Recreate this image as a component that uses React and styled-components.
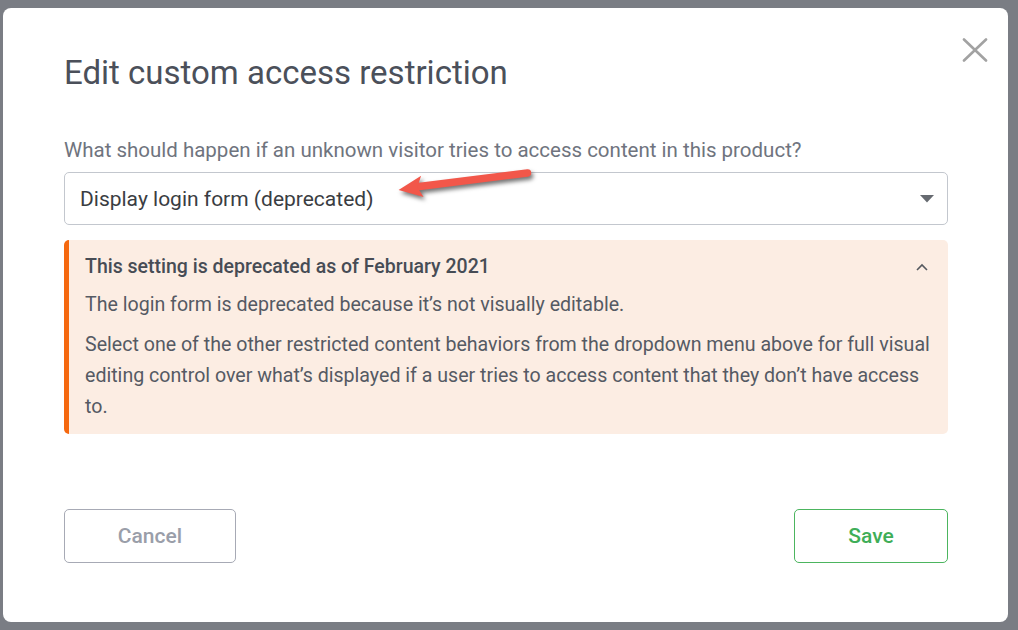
import React from 'react';
import styled, { createGlobalStyle } from 'styled-components';

const GlobalStyle = createGlobalStyle`
  html, body {
    margin: 0;
    padding: 0;
    background: #7a7d84;
  }
  body {
    font-family: Roboto, "Liberation Sans", Arial, sans-serif;
  }
`;

function App() {
  return (
    <>
      <GlobalStyle />
      <Backdrop>
        <Modal>
          <CloseButton aria-label="Close">
            <svg width="26" height="24" viewBox="0 0 26 24" fill="none" stroke="currentColor" strokeWidth="2.6" strokeLinecap="round">
              <line x1="2" y1="1.5" x2="24" y2="22.5" />
              <line x1="24" y1="1.5" x2="2" y2="22.5" />
            </svg>
          </CloseButton>

          <Title>Edit custom access restriction</Title>

          <Label>What should happen if an unknown visitor tries to access content in this product?</Label>

          <SelectWrap>
            <SelectBox>
              <span>Display login form (deprecated)</span>
              <svg width="14" height="8" viewBox="0 0 14 8">
                <path d="M0 0h14L7 7.5z" fill="#666a70" />
              </svg>
            </SelectBox>
            <Pointer width="140" height="34" viewBox="0 0 140 34">
              <g transform="rotate(-6.6 70 17)">
                <line x1="20" y1="17" x2="131" y2="16" stroke="#f2574a" strokeWidth="7.5" strokeLinecap="round" />
                <path d="M1 18 L25 6.5 L20 17.5 L25 28 Z" fill="#f2574a" />
              </g>
            </Pointer>
          </SelectWrap>

          <Notice>
            <NoticeHead>
              <NoticeTitle>This setting is deprecated as of February 2021</NoticeTitle>
              <svg width="12" height="8" viewBox="0 0 12 8" fill="none" stroke="#55595f" strokeWidth="1.6">
                <path d="M1 7L6 2l5 5" />
              </svg>
            </NoticeHead>
            <NoticeText>The login form is deprecated because it’s not visually editable.</NoticeText>
            <NoticeText>
              Select one of the other restricted content behaviors from the dropdown menu above for full visual
              editing control over what’s displayed if a user tries to access content that they don’t have access to.
            </NoticeText>
          </Notice>

          <Footer>
            <Button $tone="cancel">Cancel</Button>
            <Button $tone="save">Save</Button>
          </Footer>
        </Modal>
      </Backdrop>
    </>
  );
}

const Backdrop = styled.div`
  width: 1018px;
  height: 630px;
  box-sizing: border-box;
  padding: 8px 10px 8px 3px;
  background: #7a7d84;
`;

const Modal = styled.div`
  position: relative;
  box-sizing: border-box;
  width: 1005px;
  height: 614px;
  background: #fff;
  border-radius: 8px;
  padding: 46px 60px 0 61px;
  display: flex;
  flex-direction: column;
`;

const CloseButton = styled.button`
  position: absolute;
  top: 30px;
  right: 20px;
  border: none;
  background: none;
  padding: 0;
  color: #a2a2a2;
  cursor: pointer;
  display: flex;
`;

const Title = styled.h2`
  margin: 0;
  font-size: 33px;
  line-height: 38px;
  font-weight: 400;
  color: #4b505a;
`;

const Label = styled.div`
  margin-top: 46px;
  font-size: 20.5px;
  line-height: 24px;
  color: #6f747e;
`;

const SelectWrap = styled.div`
  position: relative;
  margin-top: 10px;
`;

const SelectBox = styled.div`
  box-sizing: border-box;
  height: 53px;
  border: 1px solid #c3c7ce;
  border-radius: 5px;
  display: flex;
  align-items: center;
  justify-content: space-between;
  padding: 0 13px 0 15px;
  font-size: 21px;
  color: #3a3d42;
`;

const Pointer = styled.svg`
  position: absolute;
  left: 333px;
  top: -8px;
  filter: drop-shadow(2px 3px 2px rgba(0, 0, 0, 0.55));
`;

const Notice = styled.div`
  margin-top: 15px;
  background: #fcede3;
  border-left: 5px solid #f5680f;
  border-radius: 5px;
  padding: 13px 18px 12px 16px;
`;

const NoticeHead = styled.div`
  display: flex;
  align-items: center;
  justify-content: space-between;
  margin-bottom: 8px;
  padding-right: 2px;
`;

const NoticeTitle = styled.div`
  font-size: 19.5px;
  line-height: 28px;
  font-weight: 500;
  color: #474c55;
`;

const NoticeText = styled.p`
  margin: 0;
  font-size: 19.6px;
  line-height: 31px;
  color: #555a63;
  & + & {
    margin-top: 9px;
  }
`;

const Footer = styled.div`
  margin-top: 75px;
  display: flex;
  justify-content: space-between;
`;

const Button = styled.button`
  box-sizing: border-box;
  height: 54px;
  width: ${p => (p.$tone === 'save' ? '154px' : '172px')};
  background: #fff;
  border-radius: 5px;
  border: 1px solid ${p => (p.$tone === 'save' ? '#4cb55f' : '#a7aab5')};
  color: ${p => (p.$tone === 'save' ? '#3fae58' : '#9a9ea9')};
  font-family: Roboto, "Liberation Sans", Arial, sans-serif;
  font-size: 21px;
  font-weight: 500;
  cursor: pointer;
`;

export default App;
